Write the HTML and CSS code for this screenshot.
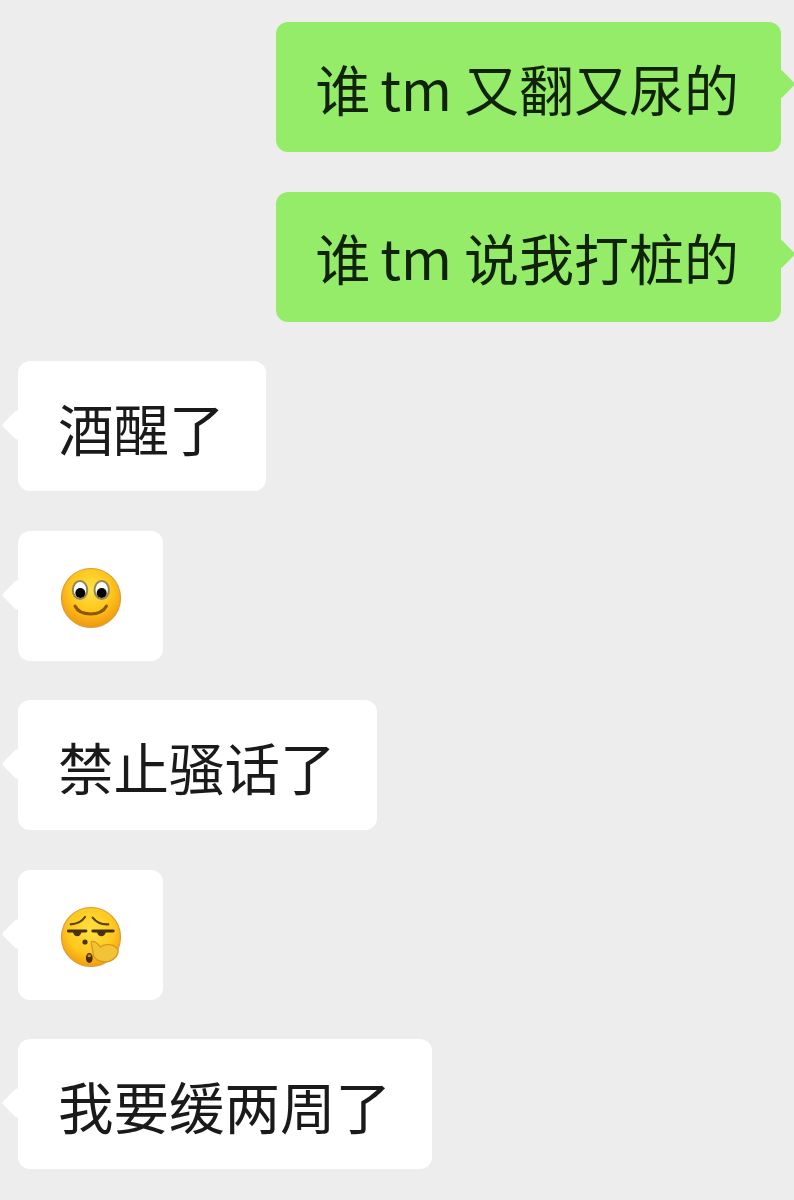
FILE: index.html
```html
<!DOCTYPE html>
<html lang="zh-CN">
<head>
<meta charset="utf-8">
<title>聊天记录</title>
<link rel="stylesheet" href="styles.css">
</head>
<body>
<main class="chat">
  <div class="bubble sent"><span>谁</span><span class="latin">tm</span><span class="after-latin">又翻又尿的</span></div>
  <div class="bubble sent"><span>谁</span><span class="latin">tm</span><span class="after-latin">说我打桩的</span></div>
  <div class="bubble received">酒醒了</div>
  <div class="bubble received emoji-bubble">
    <svg class="emoji" viewBox="0 0 62 62" role="img" aria-label="微笑">
      <defs>
        <radialGradient id="faceA" cx="50%" cy="36%" r="66%">
          <stop offset="0%" stop-color="#ffe345"/>
          <stop offset="55%" stop-color="#fec51c"/>
          <stop offset="100%" stop-color="#ee930c"/>
        </radialGradient>
      </defs>
      <circle cx="31" cy="31" r="29.500" fill="url(#faceA)" stroke="#dc9c38" stroke-width="1.200"/>
      <ellipse cx="20" cy="23" rx="7.200" ry="9" fill="#fff" stroke="#8f8660" stroke-width="2"/>
      <ellipse cx="41.700" cy="23" rx="7.200" ry="9" fill="#fff" stroke="#8f8660" stroke-width="2"/>
      <circle cx="20.300" cy="26" r="5" fill="#050505"/>
      <circle cx="41.700" cy="26" r="5" fill="#050505"/>
      <path d="M15 39 C20 49.500 41 49.500 46.500 39" fill="none" stroke="#8a5608" stroke-width="3" stroke-linecap="round"/>
    </svg>
  </div>
  <div class="bubble received">禁止骚话了</div>
  <div class="bubble received emoji-bubble">
    <svg class="emoji" viewBox="0 0 62 62" role="img" aria-label="抠鼻">
      <defs>
        <radialGradient id="faceB" cx="50%" cy="38%" r="66%">
          <stop offset="0%" stop-color="#ffe240"/>
          <stop offset="60%" stop-color="#fec81e"/>
          <stop offset="100%" stop-color="#ee960c"/>
        </radialGradient>
      </defs>
      <circle cx="31" cy="31" r="29.500" fill="url(#faceB)" stroke="#dc9c38" stroke-width="1.200"/>
      <path d="M10.700 18.300 C16 18 22 15.500 25 11 M32.700 11.600 C36 16 42 18.600 48.300 18.300" fill="none" stroke="#5a4015" stroke-width="2.200" stroke-linecap="round"/>
      <path d="M8.300 25 H26 M32.700 25 H53.300" stroke="#45300f" stroke-width="2.800" stroke-linecap="round"/>
      <path d="M12.700 25 H21.700 C21 32 13.500 32 12.700 25 Z M36.700 25 H46 C45.300 32 37.500 32 36.700 25 Z" fill="#4a2f12"/>
      <circle cx="25" cy="36" r="2.600" fill="#4d3410"/>
      <ellipse cx="29.300" cy="52" rx="3.400" ry="5" fill="#4b2a10"/>
      <ellipse cx="29.300" cy="49.800" rx="1.800" ry="1.500" fill="#c98a2a"/>
      <path d="M31.700 35.500 C34 34.500 38 38 40.500 41 C44 38.500 50 38 53 39.300 C56.500 41 58.500 44 58 47 C56.500 52 51 56 45 56 C38 55.500 33.500 52 33 47 C33.500 43 30 38.500 31.700 35.500 Z" fill="#f2c237" stroke="#d9971f" stroke-width="1.300"/>
    </svg>
  </div>
  <div class="bubble received">我要缓两周了</div>
</main>
</body>
</html>
```
FILE: styles.css
```css
html, body {
  margin: 0;
  padding: 0;
  height: 100%;
  background: #ededed;
}
.chat {
  position: relative;
  z-index: 0;
  display: flex;
  flex-direction: column;
  gap: 39.5px;
  padding: 22px 13px 0 18px;
  font-family: "Noto Sans CJK SC", "Noto Sans", sans-serif;
  font-size: 55.5px;
  color: #1a1a1a;
}
.bubble {
  position: relative;
  box-sizing: border-box;
  height: 130px;
  padding: 3px 41px 0 40px;
  display: flex;
  align-items: center;
  border-radius: 12px;
  white-space: pre;
  width: fit-content;
  line-height: 1;
}
.sent {
  align-self: flex-end;
  padding: 0 42px 0 39px;
  font-size: 55px;
  background: #95ec69;
  color: #102208;
}
.latin {
  margin-left: 10px;
}
.after-latin {
  margin-left: 12px;
}
.received {
  background: #ffffff;
}
.bubble::before {
  content: "";
  position: absolute;
  top: 52px;
  width: 22px;
  height: 22px;
  border-radius: 3px;
  transform: rotate(45deg);
  background: inherit;
  z-index: -1;
}
.sent::before { right: -9.500px; top: 51px; }
.received::before { left: -12.500px; top: 53px; }
.emoji-bubble { padding: 4px 41px 0 42px; }
.emoji {
  display: block;
  width: 62px;
  height: 62px;
}
```
